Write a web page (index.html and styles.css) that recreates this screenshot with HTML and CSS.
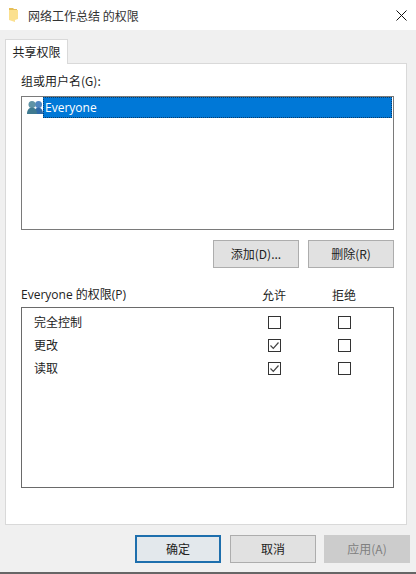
FILE: index.html
```html
<!DOCTYPE html>
<html lang="zh-CN">
<head>
    <meta charset="UTF-8">
    <title>网络工作总结 的权限</title>
    <link rel="stylesheet" href="styles.css">
</head>
<body>
    <div class="dialog">
        <div class="titlebar">
            <svg class="folder-icon" width="16" height="16" viewBox="0 0 16 16">
                <path d="M3 1h4l1 1h3v4H3z" fill="#e6bf58"/>
                <path d="M3 3h9v9l-3 1v2l-6-2z" fill="#fbe08f"/>
            </svg>
            <span class="title">网络工作总结 的权限</span>
            <svg class="close-icon" width="11" height="11" viewBox="0 0 11 11">
                <path d="M0.5 0.5L10.500 10.500M10.500 0.5L0.5 10.500" stroke="#111" stroke-width="1" fill="none"/>
            </svg>
        </div>

        <div class="main">
            <div class="tabs">
                <div class="tab">共享权限</div>
            </div>
            <div class="panel">
                <div class="label">组或用户名(G):</div>
                <div class="listbox">
                    <div class="list-row">
                        <svg class="users-icon" width="16" height="16" viewBox="0 0 16 16">
                            <circle cx="11.500" cy="4.500" r="3.500" fill="#4f86c0"/>
                            <path d="M7 14c0-4 2-6.500 4.500-6.500s4.500 2.500 4.500 6.500z" fill="#2f6aa8"/>
                            <circle cx="5" cy="4.500" r="3.500" fill="#5f93a6"/>
                            <path d="M0 14c0-4 2-6.500 5-6.500s5 2.500 5 6.500z" fill="#3f7a90"/>
                        </svg>
                        <span class="list-text">Everyone</span>
                    </div>
                </div>
                <div class="list-buttons">
                    <button class="btn">添加(D)...</button>
                    <button class="btn">删除(R)</button>
                </div>
                <div class="perm-header">
                    <span class="perm-name">Everyone 的权限(P)</span>
                    <span class="perm-col">允许</span>
                    <span class="perm-col">拒绝</span>
                </div>
                <div class="perm-box">
                    <div class="perm-row">
                        <span class="perm-name">完全控制</span>
                        <span class="perm-col"><span class="check"></span></span>
                        <span class="perm-col"><span class="check"></span></span>
                    </div>
                    <div class="perm-row">
                        <span class="perm-name">更改</span>
                        <span class="perm-col">
                            <span class="check">
                                <svg width="11" height="11" viewBox="0 0 11 11"><path d="M1.500 5.500L4.300 8.300L9.500 2.500" stroke="#444" stroke-width="1.200" fill="none"/></svg>
                            </span>
                        </span>
                        <span class="perm-col"><span class="check"></span></span>
                    </div>
                    <div class="perm-row">
                        <span class="perm-name">读取</span>
                        <span class="perm-col">
                            <span class="check">
                                <svg width="11" height="11" viewBox="0 0 11 11"><path d="M1.500 5.500L4.300 8.300L9.500 2.500" stroke="#444" stroke-width="1.200" fill="none"/></svg>
                            </span>
                        </span>
                        <span class="perm-col"><span class="check"></span></span>
                    </div>
                </div>
            </div>
            <div class="footer">
                <button class="btn btn-default">确定</button>
                <button class="btn">取消</button>
                <button class="btn btn-disabled">应用(A)</button>
            </div>
        </div>
    </div>
</body>
</html>
```

FILE: styles.css
```css
html, body {
    margin: 0;
    height: 100%;
    overflow: hidden;
}

body {
    font-family: "Noto Sans CJK SC", "Open Sans", sans-serif;
    font-size: 12px;
    color: #222;
    background: #f0f0f0;
}

.dialog {
    height: 574px;
    box-sizing: border-box;
    border-bottom: 2px solid #666;
    display: flex;
    flex-direction: column;
}

.titlebar {
    height: 30px;
    flex: none;
    background: #fff;
    display: flex;
    align-items: center;
    padding: 0 9px 0 6px;
}

.folder-icon {
    margin-right: 6px;
}

.title {
    flex: 1;
    color: #333;
}

.main {
    flex: 1;
    display: flex;
    flex-direction: column;
    padding: 9px 6px 0 5px;
}

.tabs {
    display: flex;
    height: 25px;
    margin-bottom: -1px;
    position: relative;
}

.tab {
    width: 63px;
    box-sizing: border-box;
    background: #fff;
    border: 1px solid #d9d9d9;
    border-bottom: none;
    text-align: center;
    line-height: 23px;
}

.panel {
    height: 462px;
    box-sizing: border-box;
    margin-right: 3px;
    background: #fff;
    border: 1px solid #d9d9d9;
    padding: 9px 12px 0 15px;
}

.label {
    height: 23px;
    line-height: 16px;
}

.listbox {
    height: 134px;
    box-sizing: border-box;
    border: 1px solid #7a7a7a;
    padding: 0 1px;
}

.list-row {
    display: flex;
    height: 21px;
    align-items: center;
}

.users-icon {
    margin-left: 4px;
    flex: none;
}

.list-text {
    flex: 1;
    height: 21px;
    line-height: 21px;
    padding-left: 2px;
    background: #0078d7;
    color: #fff;
    outline: 1px dotted #0a3d6b;
    outline-offset: -1px;
    font-family: "Open Sans", sans-serif;
}

.list-buttons {
    display: flex;
    justify-content: flex-end;
    gap: 9px;
    margin-top: 10px;
}

.btn {
    width: 86px;
    height: 28px;
    box-sizing: border-box;
    padding: 0 0 2px;
    background: #e1e1e1;
    border: 1px solid #adadad;
    font-family: inherit;
    font-size: 12px;
    color: #222;
}

.btn-default {
    border: 2px solid #1e6fad;
    background: #e3e8ec;
    margin-right: 1px;
}

.btn-disabled {
    background: #cccccc;
    border-color: #cccccc;
    color: #808080;
}

.perm-header {
    display: flex;
    align-items: center;
    height: 18px;
    margin-top: 17px;
    margin-bottom: 4px;
}

.perm-name {
    width: 218px;
}

.perm-header .perm-name {
    font-family: "Open Sans", "Noto Sans CJK SC", sans-serif;
}

.perm-col {
    width: 70px;
    display: flex;
    justify-content: center;
}

.perm-box {
    height: 181px;
    box-sizing: border-box;
    border: 1px solid #6a6a6a;
    padding-top: 3px;
}

.perm-row {
    display: flex;
    align-items: center;
    height: 23px;
    padding-left: 12px;
}

.perm-row .perm-name {
    width: 205px;
    margin-top: -2px;
}

.check {
    width: 13px;
    height: 13px;
    box-sizing: border-box;
    border: 1px solid #333;
    background: #fff;
    display: flex;
    align-items: center;
    justify-content: center;
}

.footer {
    display: flex;
    justify-content: flex-end;
    gap: 8px;
    margin-top: 10px;
}
```
